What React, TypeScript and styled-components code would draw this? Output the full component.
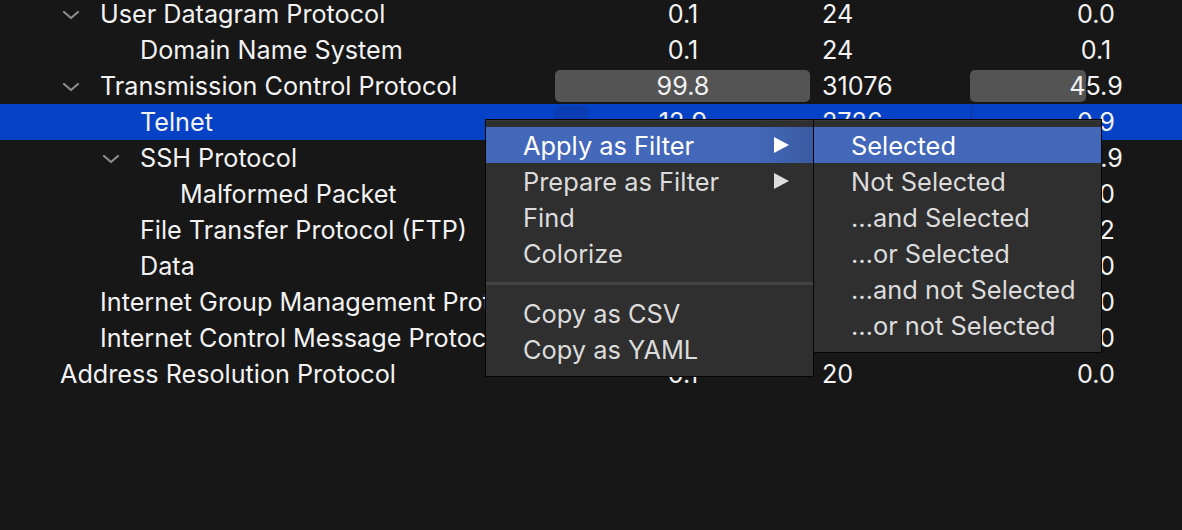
import React from 'react'
import styled, { createGlobalStyle } from 'styled-components'

type Row = {
  name: string
  level: number
  expandable?: boolean
  selected?: boolean
  percent: number
  packets: string
  bytes: number
}

const rows: Row[] = [
  { name: 'User Datagram Protocol', level: 1, expandable: true, percent: 0.1, packets: '24', bytes: 0.0 },
  { name: 'Domain Name System', level: 2, percent: 0.1, packets: '24', bytes: 0.1 },
  { name: 'Transmission Control Protocol', level: 1, expandable: true, percent: 99.8, packets: '31076', bytes: 45.9 },
  { name: 'Telnet', level: 2, selected: true, percent: 12.9, packets: '2726', bytes: 0.9 },
  { name: 'SSH Protocol', level: 2, expandable: true, percent: 86.8, packets: '27025', bytes: 43.9 },
  { name: 'Malformed Packet', level: 3, percent: 0.0, packets: '1', bytes: 0.0 },
  { name: 'File Transfer Protocol (FTP)', level: 2, percent: 0.1, packets: '36', bytes: 0.2 },
  { name: 'Data', level: 2, percent: 0.0, packets: '4', bytes: 0.0 },
  { name: 'Internet Group Management Protocol', level: 1, percent: 0.0, packets: '6', bytes: 0.0 },
  { name: 'Internet Control Message Protocol', level: 1, percent: 0.0, packets: '8', bytes: 0.0 },
  { name: 'Address Resolution Protocol', level: 0, percent: 0.1, packets: '20', bytes: 0.0 },
]

const filterItems = ['Selected', 'Not Selected', '…and Selected', '…or Selected', '…and not Selected', '…or not Selected']

// bars narrower than a pixel are not drawn
const showBar = (value: number) => value >= 0.5

const SubmenuArrow = () => (
  <svg width="17" height="18" viewBox="0 0 17 18">
    <polygon points="1,1 16,9 1,17" fill="currentColor" />
  </svg>
)

export default function App() {
  return (
    <>
      <GlobalStyle />
      <Page>
        <Tree>
          {rows.map((row) => (
            <TreeRow key={row.name} $selected={row.selected}>
              <NameCell $level={row.level}>
                <ChevronSlot>
                  {row.expandable && (
                    <svg width="18" height="10" viewBox="0 0 18 10">
                      <polyline points="2,2 9,8 16,2" fill="none" stroke="#8c8c8c" strokeWidth="2.2" strokeLinecap="round" strokeLinejoin="round" />
                    </svg>
                  )}
                </ChevronSlot>
                <Name>{row.name}</Name>
              </NameCell>

              <BarCell>
                {showBar(row.percent) && <Bar $selected={row.selected} style={{ width: `${row.percent}%` }} />}
                <BarValue>{row.percent.toFixed(1)}</BarValue>
              </BarCell>

              <PacketCell>{row.packets}</PacketCell>

              <BarCell>
                {showBar(row.bytes) && <Bar $selected={row.selected} style={{ width: `${row.bytes}%` }} />}
                <BarValue>{row.bytes.toFixed(1)}</BarValue>
              </BarCell>
            </TreeRow>
          ))}
        </Tree>

        <MenuLayer>
          <Menu $width={329}>
            <MenuItem $active $fade>
              <span>Apply as Filter</span>
              <SubmenuArrow />
            </MenuItem>
            <MenuItem>
              <span>Prepare as Filter</span>
              <SubmenuArrow />
            </MenuItem>
            <MenuItem>Find</MenuItem>
            <MenuItem>Colorize</MenuItem>
            <Separator />
            <MenuItem>Copy as CSV</MenuItem>
            <MenuItem>Copy as YAML</MenuItem>
          </Menu>

          <Menu $width={289}>
            {filterItems.map((label, i) => (
              <MenuItem key={label} $active={i === 0}>
                {label}
              </MenuItem>
            ))}
          </Menu>
        </MenuLayer>
      </Page>
    </>
  )
}

const GlobalStyle = createGlobalStyle`
  html, body {
    margin: 0;
    background: #171717;
    overflow: hidden;
  }
  body {
    font-family: Inter, "Noto Sans", sans-serif;
    -webkit-font-smoothing: antialiased;
  }
`

const Page = styled.div`
  position: relative;
  width: 1182px;
  height: 530px;
  overflow: hidden;
  background: #171717;
`

const Tree = styled.div`
  display: flex;
  flex-direction: column;
  margin-top: -4px;
`

const TreeRow = styled.div<{ $selected?: boolean }>`
  display: grid;
  grid-template-columns: 555px 256px 159px 252px;
  height: 36px;
  align-items: stretch;
  background: ${({ $selected }) => ($selected ? '#0642c6' : 'transparent')};
  color: #f2f2f2;
  font-size: 25.2px;
  line-height: 36px;
`

const NameCell = styled.div<{ $level: number }>`
  display: flex;
  align-items: center;
  padding-left: ${({ $level }) => 22 + $level * 40}px;
  overflow: hidden;
  white-space: nowrap;
`

const ChevronSlot = styled.div`
  flex: 0 0 38px;
  display: flex;
  align-items: center;
  height: 100%;
  padding-top: 1px;
`

const Name = styled.span`
  white-space: nowrap;
`

const BarCell = styled.div`
  position: relative;
  text-align: center;
`

const Bar = styled.div<{ $selected?: boolean }>`
  position: absolute;
  left: 0;
  top: 2px;
  bottom: 2px;
  border-radius: 5px;
  background: ${({ $selected }) => ($selected ? '#0a3cb3' : '#545454')};
`

const BarValue = styled.span`
  position: relative;
`

const PacketCell = styled.div`
  padding-left: 11px;
  white-space: nowrap;
`

const MenuLayer = styled.div`
  position: absolute;
  left: 485px;
  top: 119px;
  display: flex;
  align-items: flex-start;
`

const Menu = styled.div<{ $width: number }>`
  width: ${({ $width }) => $width}px;
  box-sizing: border-box;
  padding: 7px 0 9px;
  background: #2f2f2f;
  border: 1px solid #050505;
  box-shadow: inset 0 1px 0 #3a3a3a;
  display: flex;
  flex-direction: column;

  & + & {
    margin-left: -1px;
  }
`

const MenuItem = styled.div<{ $active?: boolean; $fade?: boolean }>`
  display: flex;
  align-items: center;
  justify-content: space-between;
  height: 36px;
  padding: 0 23px 0 37px;
  font-size: 25.4px;
  color: ${({ $active }) => ($active ? '#ffffff' : '#dcdcdc')};
  background: ${({ $active, $fade }) =>
    $active
      ? $fade
        ? 'linear-gradient(to right, #4468b9 82%, #3a5ba2)'
        : '#4468b9'
      : 'transparent'};
  white-space: nowrap;
`

const Separator = styled.div`
  height: 3px;
  margin: 11px 0 10px;
  background: #444444;
`
